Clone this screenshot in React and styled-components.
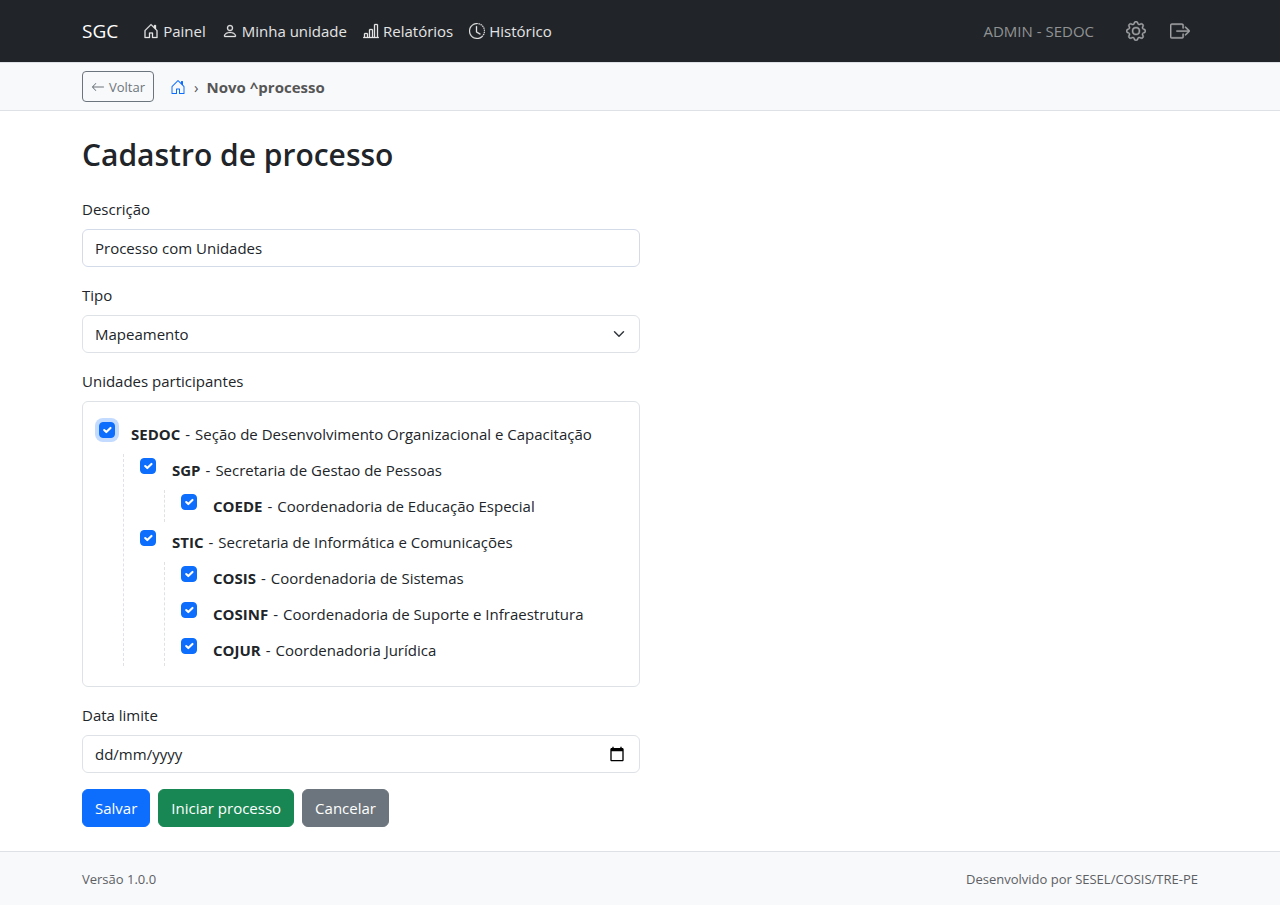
import React, { useState } from "react";
import styled, { createGlobalStyle } from "styled-components";
import {
  BsArrowLeft,
  BsBarChartLine,
  BsBoxArrowRight,
  BsClockHistory,
  BsGear,
  BsHouseDoor,
  BsPerson,
} from "react-icons/bs";

const chevron =
  "data:image/svg+xml,%3Csvg xmlns='http://www.w3.org/2000/svg' viewBox='0 0 16 16'%3E%3Cpath fill='none' stroke='%23343a40' stroke-linecap='round' stroke-linejoin='round' stroke-width='2' d='m2 5 6 6 6-6'/%3E%3C/svg%3E";
const tick =
  "data:image/svg+xml,%3Csvg xmlns='http://www.w3.org/2000/svg' viewBox='0 0 20 20'%3E%3Cpath fill='none' stroke='%23fff' stroke-linecap='round' stroke-linejoin='round' stroke-width='3' d='m6 10 3 3 6-6'/%3E%3C/svg%3E";

const GlobalStyle = createGlobalStyle`
  *, *::before, *::after { box-sizing: border-box; }
  body {
    margin: 0;
    background: #fff;
    color: #212529;
    font-family: "Open Sans", "Noto Sans", sans-serif;
    font-size: 15px;
    line-height: 24px;
  }
  button, input, select { font: inherit; color: inherit; margin: 0; }
`;

const Page = styled.div`
  display: flex;
  flex-direction: column;
  min-height: 100vh;
`;

const Container = styled.div`
  width: 100%;
  max-width: 1140px;
  margin: 0 auto;
  padding: 0 12px;
  display: flex;
  align-items: center;
`;

const Navbar = styled.header`
  background: #212529;
  padding: 11px 0;
`;

const Brand = styled.a`
  margin-right: 17px;
  padding: 5px 0;
  color: #fff;
  font-size: 19px;
  line-height: 30px;
  text-decoration: none;
`;

const NavList = styled.ul`
  display: flex;
  align-items: center;
  margin: 0;
  padding: 0;
  list-style: none;
`;

const SideNav = styled(NavList)`
  margin-left: auto;
  gap: 8px;
`;

const NavLink = styled.a`
  display: flex;
  align-items: center;
  gap: 4px;
  padding: 8px;
  color: ${(p) => (p.$muted ? "#a0a2a4" : "#e4e4e5")};
  text-decoration: none;

  svg {
    width: ${(p) => (p.$muted ? 20 : 16)}px;
    height: ${(p) => (p.$muted ? 20 : 16)}px;
    stroke-width: 0.3;
  }
`;

const Profile = styled.li`
  padding: 8px;
  margin-right: 8px;
  color: #909294;
`;

const Subbar = styled.div`
  background: #f8f9fa;
  border: solid #dee2e6;
  border-width: 1px 0;
  padding: 8px 0;
`;

const BackButton = styled.button`
  display: flex;
  align-items: center;
  gap: 4px;
  padding: 5px 8px 4px;
  border: 1px solid #6c757d;
  border-radius: 4px;
  background: transparent;
  color: #6c757d;
  font-size: 13px;
  line-height: 20px;

  svg {
    width: 14px;
    height: 14px;
  }
`;

const Crumbs = styled.ol`
  display: flex;
  align-items: center;
  gap: 8px;
  margin: 0 0 0 16px;
  padding: 0;
  list-style: none;
  color: #565656;

  li {
    display: flex;
  }
  a {
    display: flex;
    color: #0d6efd;
  }
`;

const Current = styled.li`
  font-weight: 700;
`;

const Main = styled.main`
  flex: 1;
  width: 100%;
  max-width: 1140px;
  margin: 0 auto;
  padding: 24px 12px;
`;

const Title = styled.h1`
  margin: 0 0 22px;
  font-size: 30px;
  line-height: 40px;
  font-weight: 600;
`;

const Form = styled.form`
  width: 50%;
  display: flex;
  flex-direction: column;
  gap: 16px;
`;

const Field = styled.div`
  display: flex;
  flex-direction: column;
  align-items: stretch;
  gap: 8px;
`;

const Group = styled.fieldset`
  margin: 0;
  padding: 0;
  border: 0;
  min-width: 0;

  legend {
    padding: 0;
    margin-bottom: 8px;
  }
`;

const Control = styled.input`
  width: 100%;
  height: 38px;
  padding: 6px 12px;
  border: 1px solid ${(p) => (p.$edited ? "#d3dbe9" : "#dee2e6")};
  border-radius: 6px;
  background: #fff;
  outline: 0;
`;

const Select = styled(Control)`
  appearance: none;
  background: #fff url("${chevron}") no-repeat right 12px center / 16px 12px;
`;

const DateShell = styled.div`
  display: flex;
  align-items: center;
  height: 38px;
  padding: 0 12px;
  border: 1px solid #dee2e6;
  border-radius: 6px;
`;

const DateInput = styled.input`
  flex: 1;
  min-width: 0;
  height: 24px;
  padding: 0;
  border: 0;
  outline: 0;
  background: transparent;

  &::placeholder {
    color: #212529;
    opacity: 1;
  }
`;

const PickerButton = styled.button`
  display: flex;
  padding: 2px;
  border: 0;
  background: transparent;
  color: #000;
`;

const TreeBox = styled.div`
  padding: 16px 16px 20px;
  border: 1px solid #dee2e6;
  border-radius: 6px;
`;

const Branch = styled.ul`
  display: flex;
  flex-direction: column;
  gap: 4px;
  margin: 0;
  padding: 0;
  list-style: none;

  & & {
    margin: 4px 0 0 24px;
    padding-left: 16px;
    border-left: 1px dashed #dee2e6;
  }
`;

const UnitLabel = styled.label`
  display: flex;
  align-items: flex-start;
  gap: 16px;
  padding: 4px 0;
`;

const UnitText = styled.span`
  display: flex;
  gap: 5px;
`;

const Check = styled.input`
  appearance: none;
  flex: none;
  width: 16px;
  height: 16px;
  border: 1px solid #dee2e6;
  border-radius: 4px;
  background: #fff;
  outline: 0;
  box-shadow: ${(p) => (p.$highlight ? "0 0 0 4px #c2dbfe" : "none")};

  &:checked {
    border-color: #0d6efd;
    background: #0d6efd url("${tick}") center / contain no-repeat;
  }
`;

const Actions = styled.div`
  display: flex;
  gap: 8px;
`;

const Button = styled.button`
  padding: 6px 12px;
  border: 1px solid ${(p) => p.$color};
  border-radius: 6px;
  background: ${(p) => p.$color};
  color: #fff;
`;

const Footer = styled.footer`
  border-top: 1px solid #dee2e6;
  background: #f8f9fa;
  padding: 17px 0 16px;
  color: #5c6065;
  font-size: 13px;
  line-height: 20px;

  ${Container} {
    justify-content: space-between;
  }
`;

const CalendarIcon = () => (
  <svg width="16" height="16" viewBox="0 0 24 24" fill="currentColor" aria-hidden="true">
    <path d="M20 3h-1V1h-2v2H7V1H5v2H4c-1.100 0-2 .9-2 2v16c0 1.100.9 2 2 2h16c1.100 0 2-.9 2-2V5c0-1.100-.9-2-2-2zm0 18H4V8h16v13z" />
  </svg>
);

const links = [
  { text: "Painel", Icon: BsHouseDoor },
  { text: "Minha unidade", Icon: BsPerson },
  { text: "Relatórios", Icon: BsBarChartLine },
  { text: "Histórico", Icon: BsClockHistory },
];

const units = [
  {
    code: "SEDOC",
    name: "Seção de Desenvolvimento Organizacional e Capacitação",
    children: [
      {
        code: "SGP",
        name: "Secretaria de Gestao de Pessoas",
        children: [{ code: "COEDE", name: "Coordenadoria de Educação Especial" }],
      },
      {
        code: "STIC",
        name: "Secretaria de Informática e Comunicações",
        children: [
          { code: "COSIS", name: "Coordenadoria de Sistemas" },
          { code: "COSINF", name: "Coordenadoria de Suporte e Infraestrutura" },
          { code: "COJUR", name: "Coordenadoria Jurídica" },
        ],
      },
    ],
  },
];

function Units({ items }) {
  return (
    <Branch>
      {items.map(({ code, name, children }) => (
        <li key={code}>
          <UnitLabel htmlFor={`unit-${code}`}>
            <Check
              id={`unit-${code}`}
              type="checkbox"
              defaultChecked
              $highlight={code === "SEDOC"}
            />
            <UnitText>
              <strong>{code}</strong> <span>-</span> <span>{name}</span>
            </UnitText>
          </UnitLabel>
          {children && <Units items={children} />}
        </li>
      ))}
    </Branch>
  );
}

export default function App() {
  const [description, setDescription] = useState("Processo com Unidades");

  return (
    <Page>
      <GlobalStyle />
      <Navbar>
        <Container as="nav">
          <Brand href="#">SGC</Brand>
          <NavList>
            {links.map(({ text, Icon }) => (
              <li key={text}>
                <NavLink href="#">
                  <Icon />
                  {text}
                </NavLink>
              </li>
            ))}
          </NavList>
          <SideNav>
            <Profile>ADMIN - SEDOC</Profile>
            <li>
              <NavLink href="#" $muted aria-label="Configurações">
                <BsGear />
              </NavLink>
            </li>
            <li>
              <NavLink href="#" $muted aria-label="Sair">
                <BsBoxArrowRight />
              </NavLink>
            </li>
          </SideNav>
        </Container>
      </Navbar>

      <Subbar>
        <Container>
          <BackButton type="button">
            <BsArrowLeft />
            Voltar
          </BackButton>
          <Crumbs>
            <li>
              <a href="#" aria-label="Painel">
                <BsHouseDoor size={16} />
              </a>
            </li>
            <li aria-hidden="true">›</li>
            <Current aria-current="page">Novo ^processo</Current>
          </Crumbs>
        </Container>
      </Subbar>

      <Main>
        <Title>Cadastro de processo</Title>
        <Form onSubmit={(e) => e.preventDefault()}>
          <Field>
            <label htmlFor="descricao">Descrição</label>
            <Control
              id="descricao"
              type="text"
              $edited
              value={description}
              onChange={(e) => setDescription(e.target.value)}
            />
          </Field>
          <Field>
            <label htmlFor="tipo">Tipo</label>
            <Select as="select" id="tipo" defaultValue="Mapeamento">
              <option>Mapeamento</option>
            </Select>
          </Field>
          <Group>
            <legend>Unidades participantes</legend>
            <TreeBox>
              <Units items={units} />
            </TreeBox>
          </Group>
          <Field>
            <label htmlFor="data">Data limite</label>
            <DateShell>
              <DateInput id="data" type="text" placeholder="dd/mm/yyyy" />
              <PickerButton type="button" aria-label="Abrir calendário">
                <CalendarIcon />
              </PickerButton>
            </DateShell>
          </Field>
          <Actions>
            <Button type="submit" $color="#0d6efd">Salvar</Button>
            <Button type="button" $color="#198754">Iniciar processo</Button>
            <Button type="button" $color="#6c757d">Cancelar</Button>
          </Actions>
        </Form>
      </Main>

      <Footer>
        <Container>
          <span>Versão 1.0.0</span>
          <span>Desenvolvido por SESEL/COSIS/TRE-PE</span>
        </Container>
      </Footer>
    </Page>
  );
}
